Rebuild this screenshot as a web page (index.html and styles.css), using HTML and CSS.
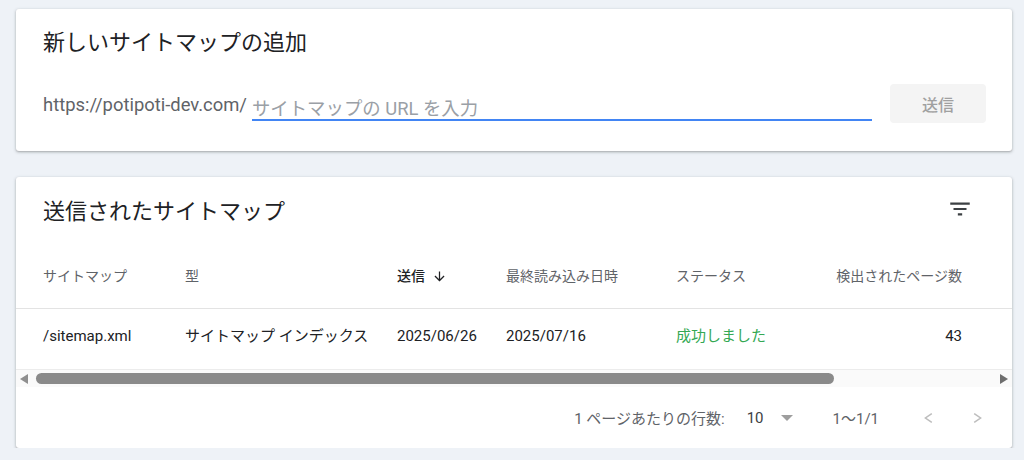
FILE: index.html
```html
<!DOCTYPE html>
<html lang="ja">

<head>
    <meta charset="UTF-8">
    <title>サイトマップ</title>
    <link rel="stylesheet" href="styles.css">
</head>

<body>
    <div class="page">
        <section class="card add-card">
            <h2 class="card-title">新しいサイトマップの追加</h2>
            <form class="add-form">
                <span class="url-prefix">https://potipoti-dev.com/</span>
                <input class="url-input" type="text" placeholder="サイトマップの URL を入力">
                <button class="submit-button" type="button" disabled>送信</button>
            </form>
        </section>

        <section class="card list-card">
            <div class="list-header">
                <h2 class="card-title">送信されたサイトマップ</h2>
                <svg class="filter-icon" viewBox="0 0 24 24" width="26" height="26">
                    <path d="M10 18h4v-2h-4v2zM3 6v2h18V6H3zm3 7h12v-2H6v2z" />
                </svg>
            </div>

            <div class="table">
                <div class="table-row table-head">
                    <div>サイトマップ</div>
                    <div>型</div>
                    <div class="sorted">送信
                        <svg class="sort-icon" viewBox="0 0 24 24" width="15" height="15">
                            <path d="M20 12l-1.41-1.41L13 16.17V4h-2v12.17l-5.58-5.59L4 12l8 8 8-8z" />
                        </svg>
                    </div>
                    <div>最終読み込み日時</div>
                    <div>ステータス</div>
                    <div class="num">検出されたページ数</div>
                </div>
                <div class="table-row">
                    <div>/sitemap.xml</div>
                    <div>サイトマップ インデックス</div>
                    <div>2025/06/26</div>
                    <div>2025/07/16</div>
                    <div class="status-ok">成功しました</div>
                    <div class="num">43</div>
                </div>
            </div>

            <div class="scrollbar">
                <span class="scroll-arrow left"></span>
                <div class="scroll-track">
                    <div class="scroll-thumb"></div>
                </div>
                <span class="scroll-arrow right"></span>
            </div>

            <div class="pagination">
                <span class="rows-label">1 ページあたりの行数:</span>
                <span class="rows-value">10</span>
                <span class="rows-caret"></span>
                <span class="page-range">1〜1/1</span>
                <svg class="page-nav prev" viewBox="0 0 9 10" width="9" height="10">
                    <polyline points="7.8,0.6 1.4,5 7.8,9.4" />
                </svg>
                <svg class="page-nav next" viewBox="0 0 9 10" width="9" height="10">
                    <polyline points="1.2,0.6 7.6,5 1.2,9.4" />
                </svg>
            </div>
        </section>
    </div>
</body>

</html>
```

FILE: styles.css
```css
body {
    margin: 0;
    padding: 9px 12px 0 16px;
    font-family: Roboto, "Noto Sans CJK JP", sans-serif;
    background: #eef2f7;
    color: #202124;
}

.page {
    display: flex;
    flex-direction: column;
    gap: 26px;
}

.card {
    background: white;
    border-radius: 3px;
    box-shadow: 0 1px 2px rgba(60, 64, 67, 0.3), 0 1px 3px 1px rgba(60, 64, 67, 0.12);
    overflow: hidden;
}

.card-title {
    margin: 0;
    font-size: 22px;
    font-weight: 400;
    line-height: 30px;
    color: #202124;
}

/* 追加フォーム */
.add-card {
    padding: 19px 26px 28px 27px;
}

.add-form {
    display: flex;
    align-items: center;
    height: 39px;
    margin: 26px 0 0;
}

.url-prefix {
    margin-top: 3px;
    font-size: 18.4px;
    line-height: 22px;
    color: #5f6368;
}

.url-input {
    flex: 1;
    box-sizing: border-box;
    height: 28px;
    margin: 6px 18px 0 5px;
    padding: 6px 0 0;
    border: none;
    border-bottom: 2px solid #4285f4;
    outline: none;
    background: transparent;
    font-family: inherit;
    font-size: 18.4px;
    color: #202124;
}

.url-input::placeholder {
    color: #9aa0a6;
}

.submit-button {
    width: 96px;
    height: 39px;
    border: none;
    border-radius: 4px;
    background: #f4f4f4;
    color: #a0a0a0;
    font-family: inherit;
    font-size: 16px;
    font-weight: 500;
}

/* 送信済み一覧 */
.list-card {
    padding-top: 20px;
}

.list-header {
    display: flex;
    justify-content: space-between;
    align-items: flex-start;
    padding: 0 39px 0 27px;
}

.filter-icon {
    margin-top: -1px;
    fill: #3c4043;
}

.table {
    margin-top: 23px;
}

.table-row {
    display: grid;
    grid-template-columns: 142px 212px 109px 170px 158px 128px;
    padding: 16px 0 22px 27px;
    font-size: 15px;
    line-height: 22px;
    white-space: nowrap;
}

.table-head {
    font-size: 14px;
    line-height: 20px;
    color: #5f6368;
    border-bottom: 1px solid #e3e3e3;
}

.sorted {
    display: flex;
    align-items: center;
    gap: 7px;
    color: #202124;
    font-weight: 500;
}

.sort-icon {
    fill: #202124;
}

.status-ok {
    color: #34a853;
}

.num {
    text-align: right;
}

/* 横スクロールバー */
.scrollbar {
    display: flex;
    align-items: center;
    height: 17px;
    padding: 0 4px;
    border-top: 1px solid #ececec;
    background: #fafafa;
}

.scroll-arrow {
    width: 0;
    height: 0;
    border-top: 5px solid transparent;
    border-bottom: 5px solid transparent;
}

.scroll-arrow.left {
    border-right: 8px solid #8f8f8f;
}

.scroll-arrow.right {
    border-left: 8px solid #6e6e6e;
}

.scroll-track {
    flex: 1;
    margin: 0 8px;
}

.scroll-thumb {
    width: 798px;
    height: 11px;
    border-radius: 6px;
    background: #8a8a8a;
}

/* ページ送り */
.pagination {
    display: flex;
    justify-content: flex-end;
    align-items: center;
    height: 61px;
    padding-right: 30px;
    font-size: 15px;
    color: #5f6368;
}

.rows-value {
    margin-left: 22px;
    color: #3c4043;
}

.rows-caret {
    width: 0;
    height: 0;
    margin-left: 17px;
    border-top: 6px solid #9e9e9e;
    border-left: 6.5px solid transparent;
    border-right: 6.5px solid transparent;
}

.page-range {
    margin-left: 40px;
}

.page-nav {
    fill: none;
    stroke: #bdbdbd;
    stroke-width: 1.5;
}

.page-nav.prev {
    margin-left: 45px;
}

.page-nav.next {
    margin-left: 40px;
}
```
